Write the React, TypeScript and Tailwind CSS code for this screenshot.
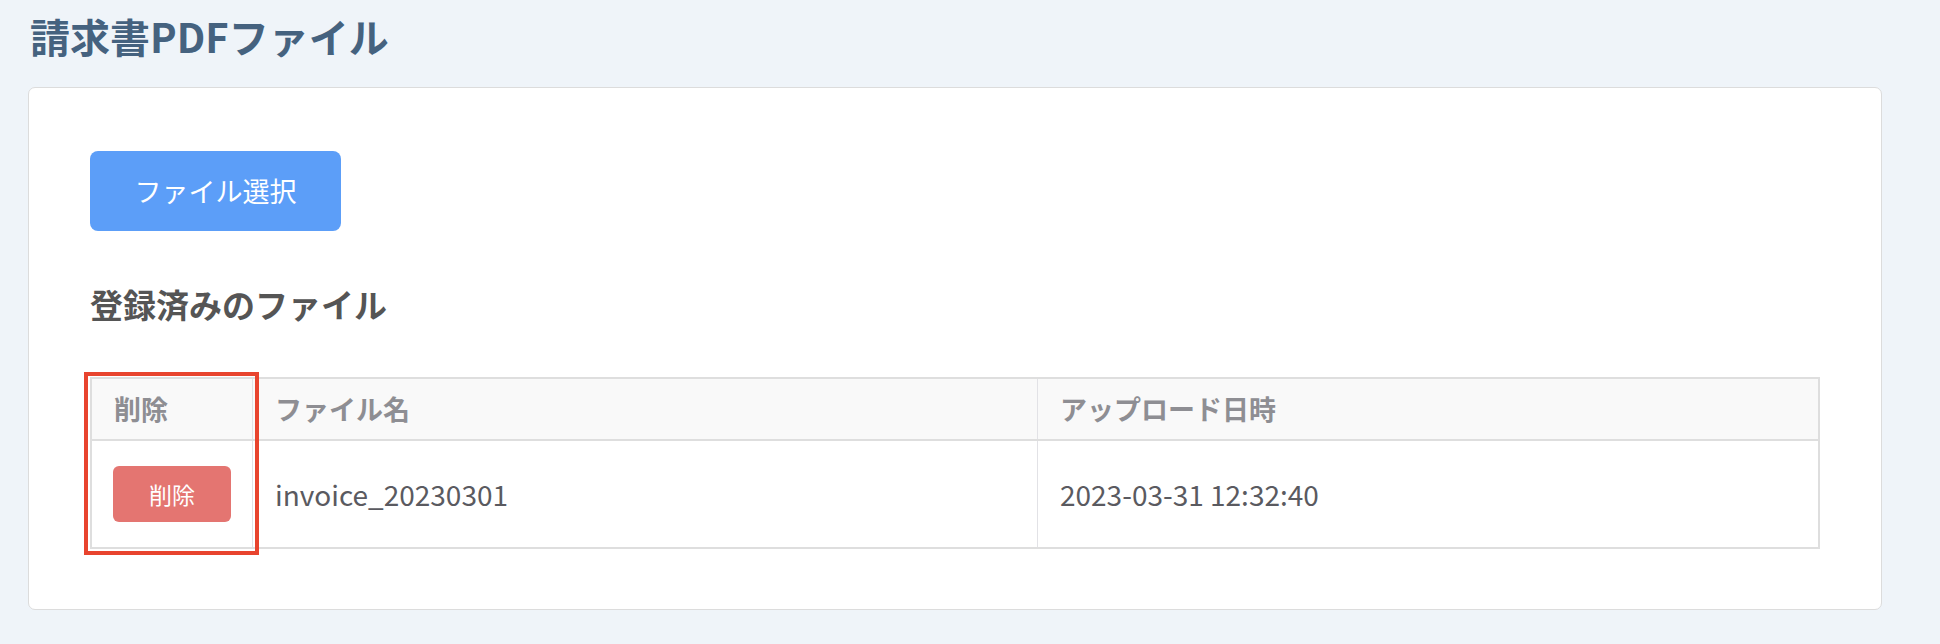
import React from "react";

const font = { fontFamily: '"Noto Sans CJK JP", "Noto Sans", sans-serif' };

export default function App() {
  return (
    <div
      className="min-h-[644px] w-[1940px] bg-[#eff4f9] pl-[28px] pt-[12px] pb-[35px]"
      style={font}
    >
      <h1 className="ml-[2px] text-[40px] font-bold leading-[48px] text-[#45627f]">
        請求書PDFファイル
      </h1>
      <div className="mt-[27px] w-[1854px] rounded-[7px] border border-[#dcdcdc] bg-white px-[61px] pt-[63px] pb-[60px]">
        <button className="flex h-[80px] w-[251px] items-center justify-center rounded-[8px] bg-[#5c9ef8] text-[27px] text-white">
          ファイル選択
        </button>
        <h2 className="mt-[49px] text-[33px] font-bold leading-[48px] text-[#555555]">
          登録済みのファイル
        </h2>
        <div className="relative mt-[49px]">
          <table className="w-full border-collapse border-2 border-[#dedede]">
            <thead>
              <tr className="h-[62px] border-b-2 border-[#dedede] bg-[#f9f9f9]">
                <th className="w-[160px] border-r border-[#e2e2e6] px-[22px] text-left text-[27px] font-bold text-[#8e8e93]">
                  削除
                </th>
                <th className="w-[785px] border-r border-[#e2e2e6] px-[22px] text-left text-[27px] font-bold text-[#8e8e93]">
                  ファイル名
                </th>
                <th className="px-[22px] text-left text-[27px] font-bold text-[#8e8e93]">
                  アップロード日時
                </th>
              </tr>
            </thead>
            <tbody>
              <tr className="h-[108px]">
                <td className="border-r border-[#e2e2e6] px-[21px]">
                  <button className="flex h-[56px] w-[118px] items-center justify-center rounded-[6px] bg-[#e47571] text-[23px] text-white">
                    削除
                  </button>
                </td>
                <td className="border-r border-[#e2e2e6] px-[22px] text-[28px] text-[#5a5a60]">
                  invoice_20230301
                </td>
                <td className="px-[22px] text-[28px] text-[#5a5a60]">
                  2023-03-31 12:32:40
                </td>
              </tr>
            </tbody>
          </table>
          <div className="pointer-events-none absolute left-[-6px] top-[-5px] h-[183px] w-[175px] border-4 border-[#e8442e]" />
        </div>
      </div>
    </div>
  );
}
